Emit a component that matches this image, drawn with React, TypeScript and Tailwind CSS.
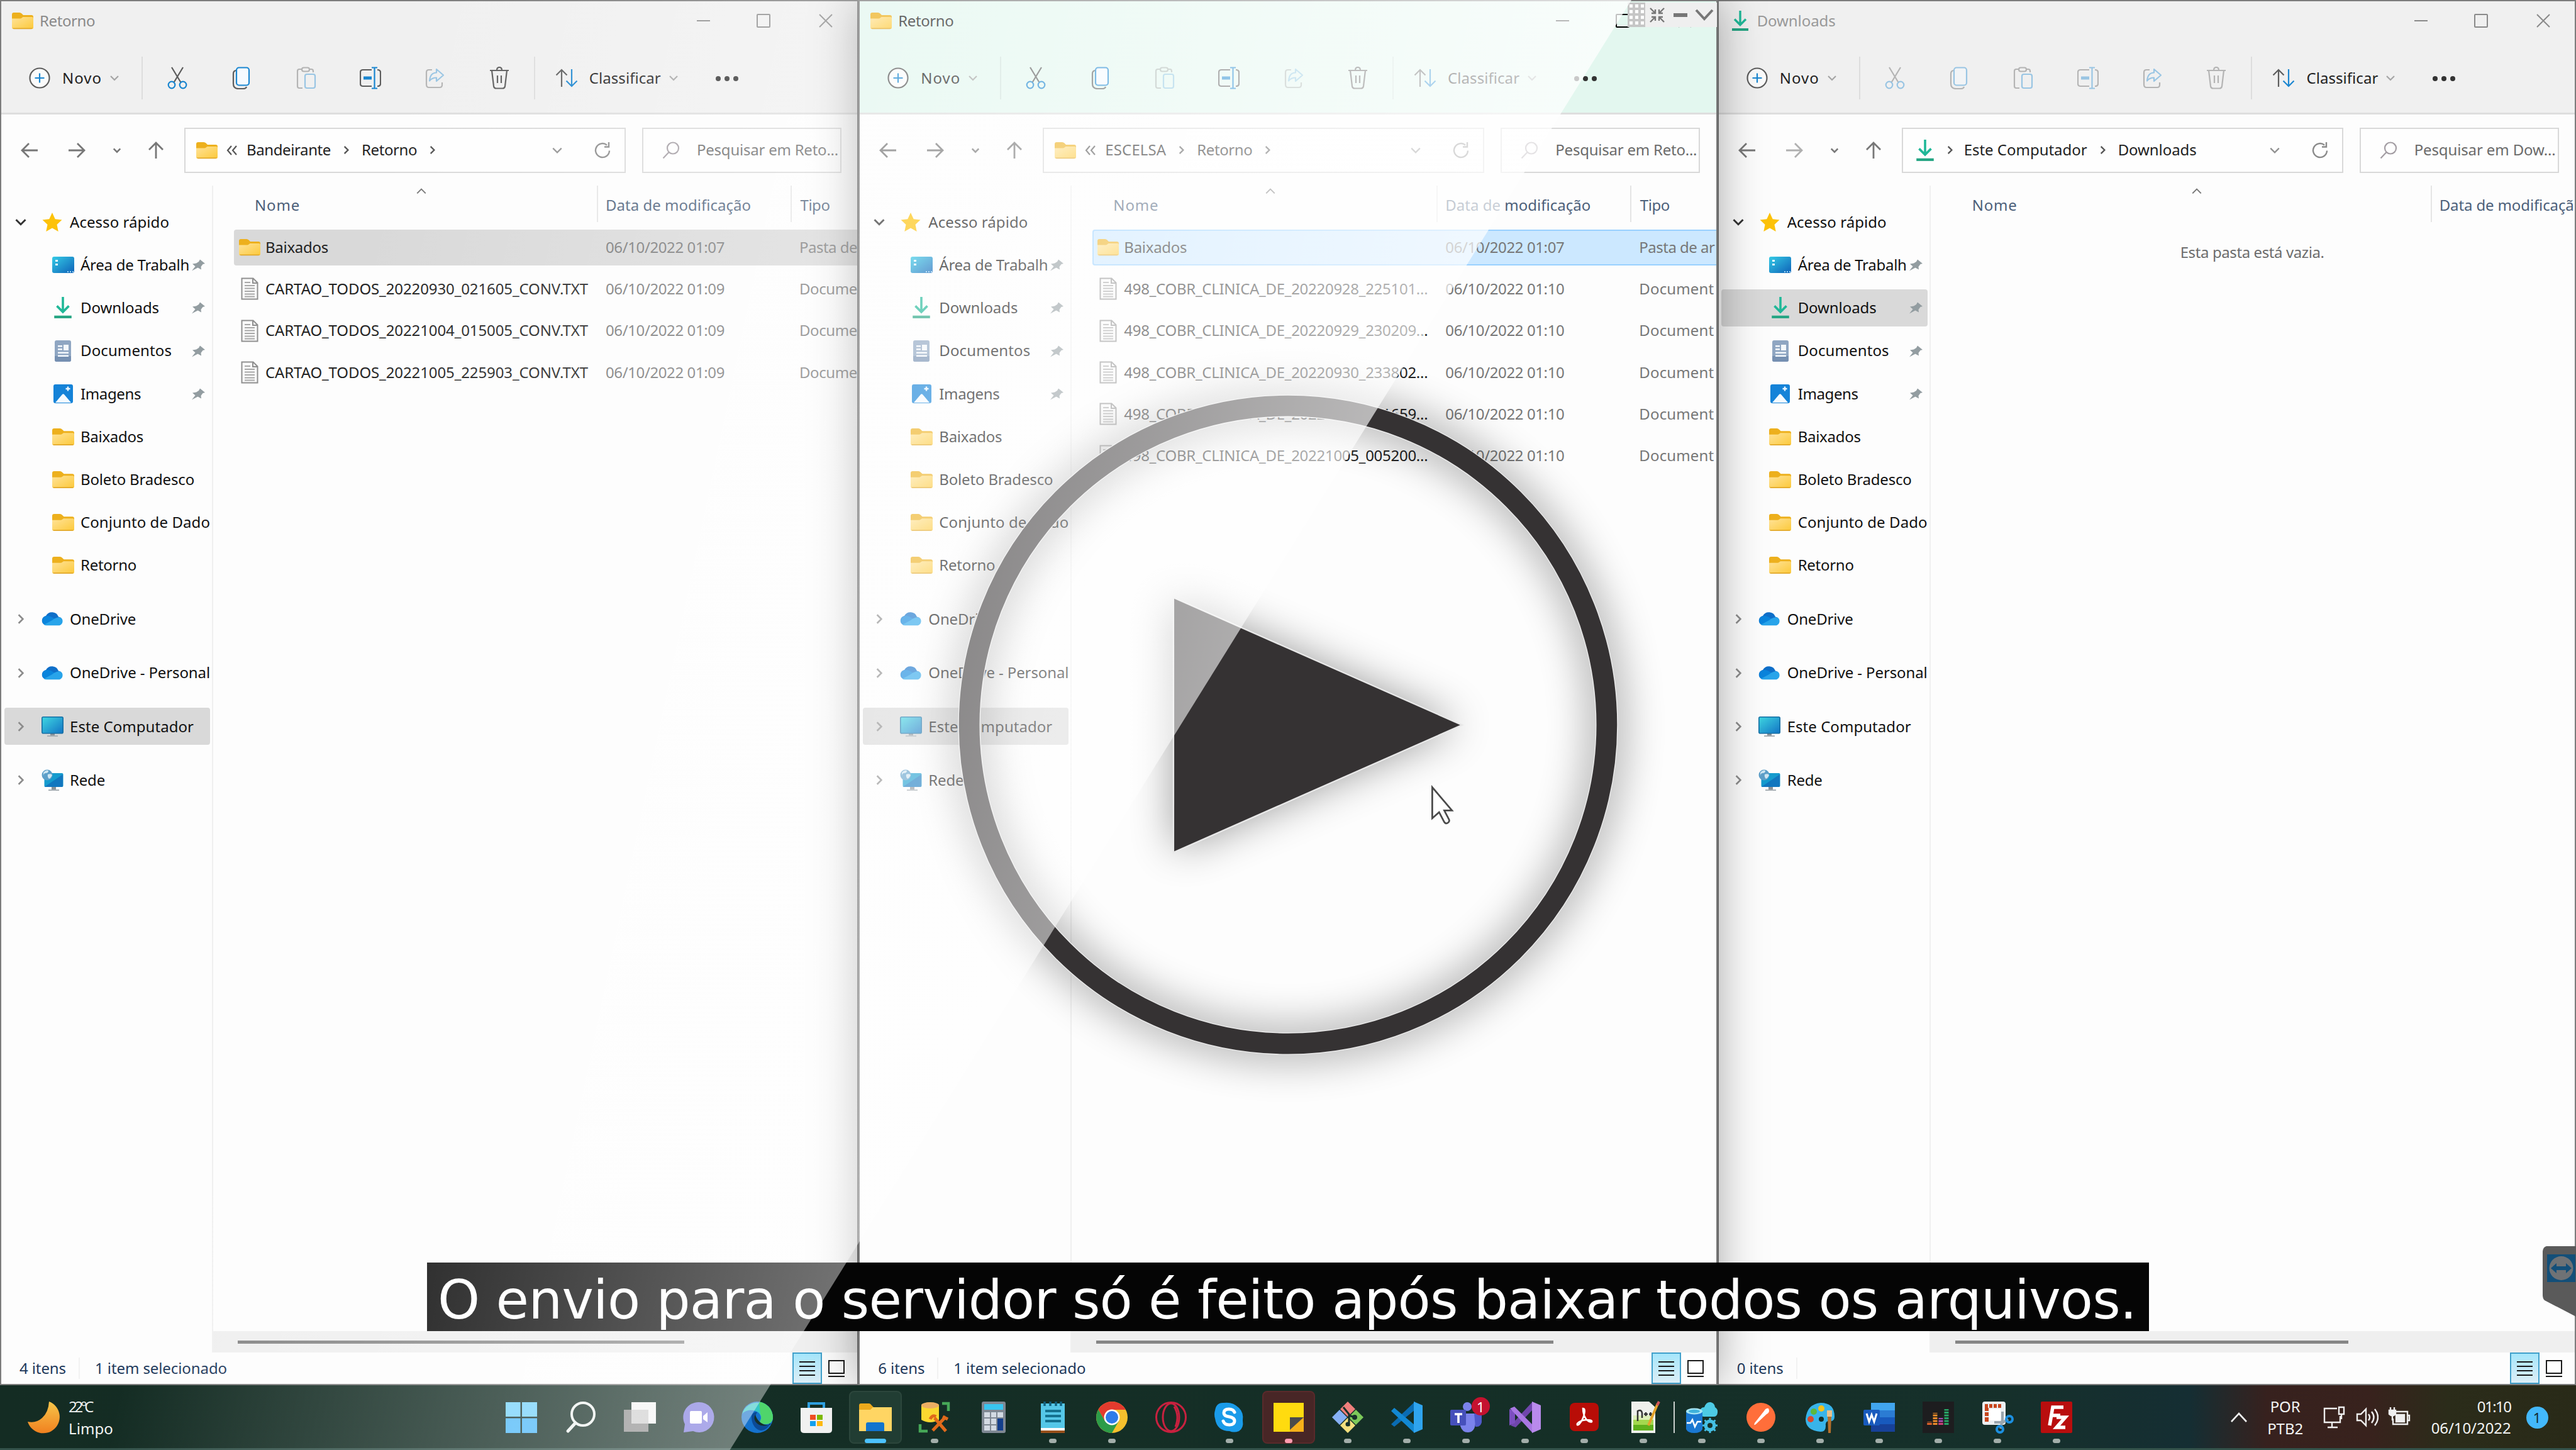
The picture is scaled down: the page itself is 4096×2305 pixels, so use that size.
import React, { useLayoutEffect, useRef, useState } from "react";

/* Text whose letter spacing is tuned so that it fills a given width */
function T({ w, className = "", children }: { w?: number; className?: string; children: string }) {
  const ref = useRef<HTMLSpanElement>(null);
  const [ls, setLs] = useState(0);
  useLayoutEffect(() => {
    if (!ref.current || !w) return;
    ref.current.style.letterSpacing = "0px";
    const nat = ref.current.getBoundingClientRect().width;
    const v = (w - nat) / children.length;
    ref.current.style.letterSpacing = v + "px";
    setLs(v);
  }, [w, children]);
  return (
    <span ref={ref} className={"inline-block shrink-0 whitespace-pre [font-variant-ligatures:none] " + className} style={{ letterSpacing: ls }}>
      {children}
    </span>
  );
}

const G = "#5c5c5c";
const B = "#1a86d0";

/* ---------- small glyphs ---------- */
const Chev = ({ d = "down", s = 16, c = "#8a8a8a", k = 2.2 }: { d?: string; s?: number; c?: string; k?: number }) => {
  const p: Record<string, string> = {
    down: "M2 5l6 6 6-6",
    up: "M2 11l6-6 6 6",
    right: "M5 2l6 6-6 6",
  };
  return (
    <svg width={s} height={s} viewBox="0 0 16 16" fill="none" stroke={c} strokeWidth={(k * 16) / s} className="shrink-0">
      <path d={p[d]} />
    </svg>
  );
};

const Folder = ({ s = 34 }: { s?: number }) => (
  <svg width={s} height={(s * 28) / 34} viewBox="0 0 34 28" className="shrink-0">
    <defs>
      <linearGradient id="fold" x1="0" y1="0" x2="1" y2="1">
        <stop offset="0" stopColor="#ffe399" />
        <stop offset="1" stopColor="#fcc93a" />
      </linearGradient>
    </defs>
    <path d="M0 4q0-3 3-3h9q2 0 3.500 1.600L18 5h13q3 0 3 3v6H0z" fill="#edb01d" />
    <path d="M0 10.500h13q1.500 0 2.500-1L17.500 8H32q2 0 2 2v15q0 2-2 2H2q-2 0-2-2z" fill="url(#fold)" />
    <path d="M1 25.500h32q-.5 1.800-2 1.800H3q-1.500 0-2-1.800z" fill="#e2a92a" />
  </svg>
);

const DownArrow = ({ s = 34 }: { s?: number }) => (
  <svg width={s} height={s} viewBox="0 0 34 34" fill="none" className="shrink-0">
    <path d="M17 1v22M8 14.500l9 9 9-9" stroke="#20b898" strokeWidth="3.400" />
    <path d="M4 31h26" stroke="#25a583" strokeWidth="4" />
  </svg>
);

const Txt = () => (
  <svg width="28" height="36" viewBox="0 0 28 36" fill="none" className="shrink-0">
    <path d="M1.500 1.500h18l7 7v26h-25z" fill="#fafafa" stroke="#8f8f8f" strokeWidth="2" />
    <path d="M19 2v7h7" stroke="#8f8f8f" strokeWidth="2" />
    <path d="M6 8h9M6 13h16M6 17.500h16M6 22h16M6 26.500h16M6 30.500h16" stroke="#a8a8a8" strokeWidth="1.800" />
  </svg>
);

const Pin = () => (
  <svg width="24" height="24" viewBox="0 0 24 24" className="shrink-0">
    <path d="M15 3.500l8 6.500-3.500 1-3 4 .5 4.500-5.500-3L2 21.500l5.500-7L3 10.500l6-1 4-2.500z" fill="#939da1" />
  </svg>
);

const Star = () => (
  <svg width="34" height="34" viewBox="0 0 34 34" className="shrink-0">
    <path d="M17 2l4.700 10.200 10.800 1.300-8 7.500 2.200 11L17 26.500 7.300 32l2.200-11-8-7.500 10.800-1.300z" fill="#fdc209" />
  </svg>
);

const Desk = () => (
  <svg width="35" height="28" viewBox="0 0 35 28" className="shrink-0">
    <defs>
      <linearGradient id="dsk" x1="0" y1="0" x2="1" y2="1">
        <stop offset="0" stopColor="#35cbe6" />
        <stop offset="1" stopColor="#0e62b8" />
      </linearGradient>
    </defs>
    <rect y="1" width="35" height="26" rx="3" fill="url(#dsk)" />
    <path d="M5 6h4v3H5zM5 12h4v3H5z" fill="#e8fbff" />
    <path d="M24 24h2v2h-2zM28 24h2v2h-2zM32 24h2v2h-2z" fill="#9fd6f5" />
  </svg>
);

const Docs = () => (
  <svg width="28" height="36" viewBox="0 0 28 36" className="shrink-0">
    <rect x="1" y="1" width="26" height="34" rx="3" fill="#8fa6c2" />
    <path d="M1 26h26v6q0 3-3 3H4q-3 0-3-3z" fill="#7690b2" />
    <path d="M6 9h7v2.500H6zM6 14h7v2.500H6zM15 8h8v9h-8zM6 19.500h17V22H6zM6 24.500h17V27H6z" fill="#f4f8fc" />
  </svg>
);

const Pics = () => (
  <svg width="31" height="32" viewBox="0 0 31 32" className="shrink-0">
    <rect y="1" width="31" height="30" rx="3" fill="#1583d8" />
    <path d="M3 30l11-13q1.500-1.500 3 0l11 13z" fill="#f5fbff" />
    <path d="M23 4.500v7M19.500 8h7" stroke="#e9f6ff" strokeWidth="2.400" />
  </svg>
);

const Cloud = () => (
  <svg width="35" height="24" viewBox="0 0 35 24" className="shrink-0">
    <path d="M8 22a7.500 7.500 0 0 1-1-14.900A11 11 0 0 1 27 8.500 6.900 6.900 0 0 1 28 22z" fill="#0f6fc9" />
    <path d="M7 7.200q5-1 9 1.600l10 6L8 22a7.500 7.500 0 0 1-1-14.800z" fill="#0a84dc" />
    <path d="M4 21l13-7q7-5.500 13-4.500a6.900 6.900 0 0 1-1.500 12.700H8q-2 0-4-1.200z" fill="#28a4ea" />
  </svg>
);

const PC = () => (
  <svg width="35" height="34" viewBox="0 0 35 34" className="shrink-0">
    <defs>
      <linearGradient id="pcg" x1="0" y1="0" x2="1" y2="1">
        <stop offset="0" stopColor="#3fd8e2" />
        <stop offset="1" stopColor="#1273c4" />
      </linearGradient>
    </defs>
    <path d="M14 27h7v4h-7z" fill="#8b9298" />
    <path d="M9 31h17v2H9z" fill="#a9b0b5" />
    <rect x=".8" y="1.800" width="33.400" height="26" rx="2" fill="url(#pcg)" stroke="#176fa4" strokeWidth="1.600" />
  </svg>
);

const Net = () => (
  <svg width="35" height="36" viewBox="0 0 35 36" className="shrink-0">
    <path d="M16 28h7v5h-7z" fill="#8b9298" />
    <path d="M11 33h17v2H11z" fill="#a9b0b5" />
    <rect x="4.500" y="7" width="30" height="22" rx="2" fill="#159bce" />
    <path d="M4.500 29L34 9v18q0 2-2 2z" fill="#1277bf" />
    <circle cx="9" cy="10" r="8.500" fill="#5d9fc9" />
    <path d="M3 6q4-5 8-3 0 4-4 4t-4 5zM10 9q5-2 7 1-2 5-5 6-3-3-2-7z" fill="#cfe6f2" />
  </svg>
);

/* ---------- toolbar glyphs ---------- */
const Svg = ({ children, w = 34, h = 36, off = false }: { children: React.ReactNode; w?: number; h?: number; off?: boolean }) => (
  <svg
    width={w}
    height={h}
    viewBox={`0 0 ${w} ${h}`}
    fill="none"
    strokeWidth="2.200"
    className={"shrink-0 " + (off ? "opacity-40" : "")}
  >
    {children}
  </svg>
);
const Cut = ({ off }: { off?: boolean }) => (
  <Svg off={off}>
    <path d="M8 1l14.500 24M26 1L11.500 25" stroke={G} />
    <circle cx="8" cy="29" r="5.300" stroke={B} />
    <circle cx="26" cy="29" r="5.300" stroke={B} />
  </Svg>
);
const Copy = ({ off }: { off?: boolean }) => (
  <Svg off={off}>
    <path d="M8 6q-4 1-4 5v16q0 8 8 8h8q4 0 5-3" stroke={G} />
    <rect x="9" y="1.500" width="20" height="28" rx="4" stroke={B} fill="#f5faff" />
  </Svg>
);
const Paste = ({ off }: { off?: boolean }) => (
  <Svg off={off}>
    <path d="M11 34H6q-3 0-3-3V7q0-3 3-3h4M22 4h3q3 0 3 3v2" stroke={G} />
    <rect x="10" y="1.500" width="12" height="6" rx="3" stroke={G} />
    <rect x="15" y="12" width="16" height="22" rx="3" stroke={B} />
  </Svg>
);
const Rename = ({ off }: { off?: boolean }) => (
  <Svg off={off}>
    <path d="M19 31H5q-4 0-4-4V9q0-4 4-4h14M28 5q5 0 5 4v18q0 4-5 4" stroke={G} />
    <path d="M19 1.500h9M23.500 1.500v33M19 34.500h9" stroke={B} />
    <rect x="6" y="15.500" width="13" height="5" fill={B} />
  </Svg>
);
const Share = ({ off }: { off?: boolean }) => (
  <Svg off={off}>
    <path d="M13 5H8q-4 0-4 4v19q0 5 4 5h17q4 0 4-4v-4" stroke={G} />
    <path d="M20 4l11 9.500L20 23v-5.500q-7 0-11 5 1-13 11-13z" stroke={B} strokeLinejoin="round" />
  </Svg>
);
const Trash = ({ off }: { off?: boolean }) => (
  <Svg off={off}>
    <path d="M2 6h30M13 6q0-5 4-5t4 5M5 6l3 25q.5 3.500 4 3.500h10q3.500 0 4-3.500L29 6M14 14v12M20 14v12" stroke={G} />
  </Svg>
);

/* ---------- explorer window ---------- */
type Row = { n: string; w: number; d: string; t: string; tw: number; folder?: boolean };
type Win = {
  title: string;
  titleW: number;
  titleCls: string;
  head: string;
  down?: boolean;
  crumbs: [string, number][];
  last: boolean;
  search: string;
  off: boolean;
  nameCol: string;
  nameCell: string;
  tipo: boolean;
  dateHead: string;
  dateW: number;
  rowSel: string;
  rows: Row[];
  thumb: string;
  count: string;
  sel: string;
  active?: boolean;
};

const side: { n: string; w: number; i: React.ReactNode; pin?: boolean }[] = [
  { n: "Área de Trabalh", w: 173, i: <Desk />, pin: true },
  { n: "Downloads", w: 125, i: <DownArrow s={36} />, pin: true },
  { n: "Documentos", w: 145, i: <Docs />, pin: true },
  { n: "Imagens", w: 96, i: <Pics />, pin: true },
  { n: "Baixados", w: 100, i: <Folder s={35} /> },
  { n: "Boleto Bradesco", w: 181, i: <Folder s={35} /> },
  { n: "Conjunto de Dado", w: 206, i: <Folder s={35} /> },
  { n: "Retorno", w: 89, i: <Folder s={35} /> },
];
const groups: { n: string; w: number; i: React.ReactNode }[] = [
  { n: "OneDrive", w: 105, i: <Cloud /> },
  { n: "OneDrive - Personal", w: 223, i: <Cloud /> },
  { n: "Este Computador", w: 197, i: <PC /> },
  { n: "Rede", w: 56, i: <Net /> },
];

function Sidebar({ sel }: { sel: string }) {
  return (
    <div className="flex w-[337px] shrink-0 flex-col border-r-2 border-[#f0f0f0] pt-[24px] text-[#111]">
      <div className="flex h-[68.2px] items-center pl-[21px]">
        <Chev s={20} c="#333" k={3} />
        <div className="ml-[23px] flex w-[34px] justify-center"><Star /></div>
        <T w={158} className="ml-[11px]">Acesso rápido</T>
      </div>
      {side.map((r) => (
        <div key={r.n} className="flex h-[68.2px] items-center pl-[4px] pr-[3px]">
          <div className={"flex h-[59px] w-full items-center rounded-[4px] " + (sel === r.n ? "bg-[#d9d9d9]" : "")}>
            <div className="ml-[75px] flex w-[38px] shrink-0 justify-center">{r.i}</div>
            <div className={"ml-[9px] " + (r.pin ? "w-[172px]" : "w-[205px]")}>
              <T w={r.w}>{r.n}</T>
            </div>
            {r.pin && <div className="ml-[3px]"><Pin /></div>}
          </div>
        </div>
      ))}
      <div className="mt-[9px] flex flex-col">
        {groups.map((r) => (
          <div key={r.n} className="flex h-[85.3px] items-center pl-[5px] pr-[3px]">
            <div className={"flex h-[59px] w-full items-center rounded-[4px] " + (sel === r.n ? "bg-[#d9d9d9]" : "")}>
              <div className="ml-[17px]"><Chev d="right" s={18} c="#8c8c8c" k={2.6} /></div>
              <div className="ml-[23px] flex w-[36px] shrink-0 justify-center">{r.i}</div>
              <T w={r.w} className="ml-[10px]">{r.n}</T>
            </div>
          </div>
        ))}
      </div>
    </div>
  );
}

function Explorer({ v }: { v: Win }) {
  const vline = <div className="h-[68px] w-[2px] shrink-0 bg-black/8" />;
  return (
    <div
      className={
        "flex h-[2202px] w-[1365.33px] shrink-0 flex-col overflow-hidden border-2 border-[#7c7c7c] bg-[#fdfdfd] text-[24px] " +
        (v.active ? "relative z-10 shadow-[0_0_70px_rgba(0,0,0,0.36)]" : "")
      }
    >
      <div className={"flex h-[180px] shrink-0 flex-col border-b-3 border-[#dedede] " + v.head}>
        <div className="flex h-[62px] shrink-0 items-center pl-[17px]">
          {v.down ? <DownArrow s={34} /> : <Folder />}
          <T w={v.titleW} className={"ml-[10px] mt-[1px] " + v.titleCls}>{v.title}</T>
          <div className="ml-auto flex items-center pr-[39px]">
            <div className={"h-[2px] w-[21px] " + (v.active ? "bg-black" : "bg-[#8a8a8a]")} />
            <div className={"ml-[74px] h-[22px] w-[22px] rounded-[2px] border-2 " + (v.active ? "border-black" : "border-[#8a8a8a]")} />
            <svg width="22" height="22" viewBox="0 0 22 22" stroke="#8a8a8a" strokeWidth="2" className="ml-[77px]">
              <path d="M1 1l20 20M21 1L1 21" />
            </svg>
          </div>
        </div>
        <div className="flex flex-1 items-center pl-[44px] pt-[4px] text-[#222]">
          <svg width="34" height="34" viewBox="0 0 34 34" fill="none" strokeWidth="2.200" className="shrink-0">
            <circle cx="17" cy="17" r="15.500" stroke={G} fill="#fbfbfb" />
            <path d="M17 9.500v15M9.500 17h15" stroke={B} />
          </svg>
          <T w={63} className="ml-[19px] mt-[2px]">Novo</T>
          <div className="ml-[12px] mr-[35px]"><Chev c="#a5a5a5" /></div>
          {vline}
          <div className="ml-[4px] flex">
            {[
              <Cut off={v.off} />,
              <Copy off={v.off} />,
              <Paste off />,
              <Rename off={v.off} />,
              <Share off />,
              <Trash off={v.off} />,
            ].map((el, i) => (
              <div key={i} className="flex w-[102.300px] justify-center">{el}</div>
            ))}
          </div>
          <div className="ml-[4px]">{vline}</div>
          <svg width="36" height="30" viewBox="0 0 36 30" fill="none" strokeWidth="2.200" className="ml-[32px] shrink-0">
            <path d="M10 29V2M1.500 10.500L10 2l8.500 8.500" stroke={G} />
            <path d="M26 1v27M17.500 19.500L26 28l8.500-8.500" stroke={B} />
          </svg>
          <T w={114} className="ml-[18px] mt-[2px]">Classificar</T>
          <div className="ml-[12px]"><Chev c="#a5a5a5" /></div>
          <div className="ml-[59px] mt-[2px] flex gap-[6px]">
            {[0, 1, 2].map((i) => (
              <div key={i} className="h-[8px] w-[8px] rounded-full bg-[#333]" />
            ))}
          </div>
        </div>
      </div>

      <div className="flex h-[113px] shrink-0 items-center text-[#222]">
        <svg width="28" height="26" viewBox="0 0 28 26" fill="none" stroke="#777" strokeWidth="2.800" className="ml-[31px]">
          <path d="M27 13H2M13 2L2 13l11 11" />
        </svg>
        <svg width="28" height="26" viewBox="0 0 28 26" fill="none" stroke={v.down ? "#b0b0b0" : "#777"} strokeWidth="2.800" className="ml-[47px]">
          <path d="M1 13h25M15 2l11 11-11 11" />
        </svg>
        <div className="ml-[43px]"><Chev s={14} c="#777" k={2.600} /></div>
        <svg width="26" height="28" viewBox="0 0 26 28" fill="none" stroke="#777" strokeWidth="2.800" className="ml-[42px]">
          <path d="M13 27V2M2 13L13 2l11 11" />
        </svg>
        <div className="ml-[32px] flex h-[72px] w-[702px] shrink-0 items-center border-2 border-[#d9d9d9] bg-[#fefefe] pl-[17px]">
          {v.down ? <DownArrow s={36} /> : <Folder />}
          <div className={"flex justify-center " + (v.down ? "w-[44px]" : "w-[46px]")}>
            {v.last ? (
              <svg width="18" height="16" viewBox="0 0 18 16" fill="none" stroke="#555" strokeWidth="2.200">
                <path d="M8 1L2 8l6 7M16 1l-6 7 6 7" />
              </svg>
            ) : (
              <Chev d="right" s={15} c="#555" k={2.400} />
            )}
          </div>
          {v.crumbs.map(([n, w], i) => (
            <React.Fragment key={n}>
              <T w={w}>{n}</T>
              {(i === 0 || v.last) && <div className="flex w-[49px] justify-center"><Chev d="right" s={15} c="#555" k={2.400} /></div>}
            </React.Fragment>
          ))}
          <div className="ml-auto flex items-center pr-[21px]">
            <Chev s={18} c="#909090" />
            <svg width="28" height="28" viewBox="0 0 28 28" fill="none" stroke="#8a8a8a" strokeWidth="2.400" className="ml-[49px]">
              <path d="M25 14.500A11 11 0 1 1 21 5.600M24 1v7.500h-7" />
            </svg>
          </div>
        </div>
        <div className="ml-[26px] flex h-[72px] w-[317px] shrink-0 items-center overflow-hidden border-2 border-[#d9d9d9] bg-[#fefefe] pl-[30px]">
          <svg width="28" height="28" viewBox="0 0 28 28" fill="none" stroke="#a39da3" strokeWidth="2.200" className="shrink-0">
            <circle cx="17" cy="10.500" r="9" />
            <path d="M10.500 17L1.500 26.500" />
          </svg>
          <T w={225} className="ml-[27px] text-[#6b6b6b]">{v.search}</T>
        </div>
      </div>

      <div className="flex min-h-0 flex-1">
        <Sidebar sel={v.sel} />
        <div className="flex min-w-0 flex-1 flex-col">
          <div className="flex h-[65px] shrink-0 items-start pl-[51px] text-[#4c607a]">
            <div className={"relative flex h-[58px] shrink-0 items-center border-r-2 border-[#e5e5e5] pl-[15px] pt-[4px] " + v.nameCol}>
              <T w={72}>Nome</T>
              <div className="absolute inset-x-0 top-0 flex justify-center"><Chev d="up" s={18} c="#777" k={2} /></div>
            </div>
            <div className={"flex h-[58px] w-[307.500px] shrink-0 items-center pl-[12px] pt-[4px] " + (v.tipo ? "border-r-2 border-[#e5e5e5]" : "")}>
              <T w={v.dateW}>{v.dateHead}</T>
            </div>
            {v.tipo && <div className="flex h-[58px] items-center pl-[14px] pt-[4px]"><T w={47}>Tipo</T></div>}
          </div>
          {v.rows.length === 0 && (
            <div className="mt-[25px] flex pl-[397px] text-[#6d6d6d]"><T w={229}>Esta pasta está vazia.</T></div>
          )}
          {v.rows.map((r, i) => (
            <div key={r.n} className="flex h-[66.300px] shrink-0 items-center pl-[33px]">
              <div className={"flex h-[57px] flex-1 items-center rounded-l-[4px] border-y-2 border-l-2 " + (i === 0 ? v.rowSel : "border-transparent")}>
                <div className="flex w-[46px] shrink-0 justify-center">{r.folder ? <Folder /> : <Txt />}</div>
                <div className={"shrink-0 pl-[2px] text-[#222] " + v.nameCell}><T w={r.w}>{r.n}</T></div>
                <div className="w-[308px] shrink-0 text-[#777]"><T w={189}>{r.d}</T></div>
                <T w={r.tw} className="text-[#777]">{r.t}</T>
              </div>
            </div>
          ))}
          <div className="mt-auto flex h-[34px] shrink-0 items-center bg-[#efefef] pl-[39px]">
            <div className={"h-[5px] bg-[#868686] " + v.thumb} />
          </div>
        </div>
      </div>

      <div className="flex h-[50px] shrink-0 items-center pl-[29px] text-[#1e395b]">
        <T w={74}>{v.count}</T>
        <div className="ml-[20px] h-[34px] w-[2px] bg-[#f2f2f2]" />
        {v.rows.length > 0 && <T w={210} className="ml-[24px]">1 item selecionado</T>}
        <div className="ml-auto flex h-full items-center pr-[20px]">
          <div className="flex h-full w-[47px] flex-col items-center justify-center gap-[5px] border-2 border-[#41a0cb] bg-gradient-to-b from-[#a5e6fb] to-[#dceef6]">
            {[0, 1, 2, 3].map((i) => (
              <div key={i} className="h-[2px] w-[25px] bg-[#1a1a1a]" />
            ))}
          </div>
          <div className="ml-[10px] flex flex-col gap-[3px]">
            <div className="h-[22px] w-[26px] border-2 border-[#1a1a1a] bg-white" />
            <div className="h-[2px] w-[26px] bg-[#1a1a1a]" />
          </div>
        </div>
      </div>
    </div>
  );
}

const f1 = (n: string): Row => ({ n, w: 513, d: "06/10/2022 01:09", t: "Docume", tw: 92 });
const f2 = (n: string): Row => ({ n, w: 483, d: "06/10/2022 01:10", t: "Document", tw: 119 });
const bx = (t: string, tw: number): Row => ({ n: "Baixados", w: 100, d: "06/10/2022 01:07", t, tw, folder: true });

const wins: Win[] = [
  {
    title: "Retorno", titleW: 88, titleCls: "text-[#8a8a8a]", head: "bg-[#f0f0f0]",
    crumbs: [["Bandeirante", 134], ["Retorno", 88]], last: true, search: "Pesquisar em Reto...", off: false,
    nameCol: "w-[561px]", nameCell: "w-[543px]", tipo: true, dateHead: "Data de modificação", dateW: 231, rowSel: "border-[#d9d9d9] bg-[#d9d9d9]",
    rows: [bx("Pasta de", 92), f1("CARTAO_TODOS_20220930_021605_CONV.TXT"), f1("CARTAO_TODOS_20221004_015005_CONV.TXT"), f1("CARTAO_TODOS_20221005_225903_CONV.TXT")],
    thumb: "w-[710px]", count: "4 itens", sel: "Este Computador",
  },
  {
    title: "Retorno", titleW: 88, titleCls: "text-[#222]", head: "bg-[#e3f7ef]", active: true,
    crumbs: [["ESCELSA", 97], ["Retorno", 88]], last: true, search: "Pesquisar em Reto...", off: false,
    nameCol: "w-[531px]", nameCell: "w-[513px]", tipo: true, dateHead: "Data de modificação", dateW: 231, rowSel: "border-[#99d1ff] bg-[#cce8ff]",
    rows: [
      bx("Pasta de ar", 120),
      f2("498_COBR_CLINICA_DE_20220928_225101..."),
      f2("498_COBR_CLINICA_DE_20220929_230209..."),
      f2("498_COBR_CLINICA_DE_20220930_233802..."),
      f2("498_COBR_CLINICA_DE_20221004_021659..."),
      f2("498_COBR_CLINICA_DE_20221005_005200..."),
    ],
    thumb: "w-[727px]", count: "6 itens", sel: "Este Computador",
  },
  {
    title: "Downloads", titleW: 125, titleCls: "text-[#999]", head: "bg-[#f0f0f0]", down: true,
    crumbs: [["Este Computador", 196], ["Downloads", 125]], last: false, search: "Pesquisar em Dow...", off: true,
    nameCol: "w-[746px]", nameCell: "w-[541px]", tipo: false, dateHead: "Data de modificaçã", dateW: 214, rowSel: "",
    rows: [], thumb: "w-[625px]", count: "0 itens", sel: "Downloads",
  },
];

/* ---------- taskbar ---------- */
type App = { k: string; dot?: boolean; el: React.ReactNode };
const apps: App[] = [
  { k: "start", el: (<g><path d="M0 1h23.500v23H0zM26 1h24v23H26z" fill="#76d2fb" /><path d="M0 26.500h23.500V50H0zM26 26.500h24V50H26z" fill="#4fb9f8" /></g>) },
  { k: "search", el: (<g fill="none" stroke="#eef2f0" strokeWidth="4"><circle cx="29" cy="20" r="18" /><path d="M17 34L5 47" strokeWidth="5" strokeLinecap="round" /></g>) },
  { k: "tasks", el: (<g><path d="M0 13h39v35H0z" fill="#8f8f8f" /><path d="M12 1h39v34H12z" fill="#f4f4f4" /><path d="M12 13h27v22H12z" fill="#cfcfcf" /></g>) },
  { k: "chat", el: (<g><path d="M25 1a24 24 0 1 1-9 46L1 49l2-13A24 24 0 0 1 25 1z" fill="#7c78dd" /><rect x="11" y="15" width="19" height="20" rx="2" fill="#fff" /><path d="M32 23l7-6v16l-7-5z" fill="#fff" /></g>) },
  { k: "edge", el: (<g><circle cx="25" cy="25" r="25" fill="#1572cd" /><path d="M1 20A25 25 0 0 1 50 25c0 8-6 11-12 11-6 0-10-3-8-6 3-6-1-13-8-15C13 12 4 15 1 20z" fill="#34c5c4" /><path d="M28 .3A25 25 0 0 1 50 25c0 8-6 11-12 11-6 0-10-3-8-6 2-3 2-7 0-10z" fill="#4fd56b" /><path d="M16 25c0-7 6-9 9-8-5 6-3 17 7 20 6 2 11 0 14-2-3 6-8 10-14 11-9 0-16-10-16-21z" fill="#0b4a96" /><path d="M22 21c-4 6 0 14 9 17 6 1 11 0 14-3l6 2V33c-3 3-8 4-12 4-8-1-14-7-17-16z" fill="#16302a" /></g>) },
  { k: "store", el: (<g><path d="M13 14V3h24v11" fill="none" stroke="#2f9fdf" strokeWidth="4" /><path d="M0 10h50v35q0 5-6 5H6q-6 0-6-5z" fill="#f1f1f1" /><path d="M15 21h9v8h-9z" fill="#f04f23" /><path d="M26 21h9v8h-9z" fill="#7db900" /><path d="M15 31h9v8h-9z" fill="#13a0ee" /><path d="M26 31h9v8h-9z" fill="#fdb913" /></g>) },
  { k: "files", el: (<g><path d="M-1 6q0-3 3-3h13q2 0 4 3l3 3h28v10H-1z" fill="#eda91c" /><path d="M-1 13h18l4-4h30v38H-1z" fill="#ffd563" /><path d="M10 47V36q0-3 3-3h23q3 0 3 3v11z" fill="#1274ce" /></g>) },
  { k: "db", dot: true, el: (<g><path d="M4 5q12-7 28 0v24q-14 8-28 0z" fill="#fbd830" /><ellipse cx="18" cy="6" rx="14" ry="5" fill="#ecae63" /><path d="M37 3h10v12M2 36v11h12" fill="none" stroke="#46a757" strokeWidth="4.500" /><path d="M22 46l21-22M25 26l18 21M18 28q4-8 9-4M38 24l8 4" stroke="#e06a1b" strokeWidth="5" fill="none" /></g>) },
  { k: "calc", el: (<g><rect x="6" width="38" height="50" rx="3" fill="#7f8893" /><path d="M10 4h30v9H10z" fill="#39c5ef" /><g fill="#d3dae3"><path d="M10 17h9v8h-9zM21 17h8v8h-8zM31 17h9v8h-9zM10 27h9v9h-9zM21 27h8v9h-8zM10 38h9v8h-9zM21 38h8v8h-8z" /></g><path d="M31 27h9v19h-9z" fill="#143f8c" /></g>) },
  { k: "notepad", dot: true, el: (<g><path d="M6 3h38v40H6z" fill="#55c7e8" /><path d="M12 0v7M21 0v7M30 0v7M38 0v7" stroke="#12617f" strokeWidth="3.500" /><path d="M13 15h25M13 23h25M13 31h25" stroke="#14718f" strokeWidth="4" /><path d="M6 42h38v4H6z" fill="#fff" /><path d="M6 46h38v4H6z" fill="#98501b" /></g>) },
  { k: "chrome", dot: true, el: (<g><circle cx="25" cy="25" r="25" fill="#f6c02d" /><path d="M3.500 12.500A25 25 0 0 0 25 50l11-19H14z" fill="#2c9c48" /><path d="M3.500 12.500L14 31l11-18h22a25 25 0 0 0-43.500-.5z" fill="#e33b2e" /><circle cx="25" cy="25" r="12.500" fill="#fff" /><circle cx="25" cy="25" r="10" fill="#2e7bea" /></g>) },
  { k: "opera", el: (<g fill="none" stroke="#c8213f" strokeWidth="3"><circle cx="25" cy="25" r="23.500" /><ellipse cx="25" cy="25" rx="13" ry="22" /><path d="M30 8q9 15 2 32" /></g>) },
  { k: "skype", dot: true, el: (<g><path d="M2 14Q4 1 16 2q14-2 24 8 8 8 6 20 2 12-6 17-8 3-15 0-20 0-23-20Q0 20 2 14z" fill="#1a9be9" /><path d="M33 17q-2-5-9-5-8 0-8 6 0 5 8 6 9 1.500 9 7t-8 6q-8 0-10-6" fill="none" stroke="#fff" strokeWidth="5" strokeLinecap="round" /></g>) },
  { k: "sticky", dot: true, el: (<g><path d="M1 2h48v46H1z" fill="#ffdb0f" /><path d="M27 48V25h22v23z" fill="#f6b01a" /><path d="M27 25h22L27 45z" fill="#4b4b4b" /></g>) },
  { k: "git", dot: true, el: (<g><path d="M25 0l12 12-12 12-12-12z" fill="#ef7f7c" /><path d="M38 13l12 12-12 12-12-12z" fill="#7cc95a" /><path d="M12 13l12 12-12 12L0 25z" fill="#86b0f5" /><path d="M25 26l12 12-12 12-12-12z" fill="#f3df7d" /><path d="M18 9l9 11v19M27 22l9 3" fill="none" stroke="#16302a" strokeWidth="3" /><circle cx="36" cy="25" r="4" fill="#16302a" /><circle cx="25" cy="36" r="3.500" fill="#16302a" /></g>) },
  { k: "code", dot: true, el: (<g><path d="M0 36l5 4 33-27V0z" fill="#0a6cb2" /><path d="M0 15l5-5 32 27-1 12z" fill="#1288d2" /><path d="M36 0l14 6v38l-14 6z" fill="#2fa4ee" /></g>) },
  { k: "teams", dot: true, el: (<g><circle cx="27" cy="8" r="7" fill="#7b83eb" /><path d="M16 19h24v17q-2 13-12 13-9 0-12-10z" fill="#7b83eb" /><path d="M38 19h12v14q-2 8-10 7z" fill="#5059c9" /><rect x="0" y="13" width="25" height="25" rx="2" fill="#4650bb" /><path d="M7 20h12M13 20v14" stroke="#fff" strokeWidth="3.600" /></g>) },
  { k: "vs", dot: true, el: (<g><path d="M2 38l8 3 27-28V0z" fill="#6f46ac" /><path d="M0 12v26l9-4V16z" fill="#7c4fc0" /><path d="M1 11l7-3 29 29v13z" fill="#a877e2" /><path d="M36 0l14 6v38l-14 6z" fill="#b98aec" /></g>) },
  { k: "acrobat", dot: true, el: (<g><rect x="2" y="2" width="46" height="45" rx="8" fill="#b80d07" /><path d="M23 11q4 0 2 9t-8 16q-4 3-3-1 4-5 14-6 10 0 9 3-2 2-8-3-6-7-6-18z" fill="none" stroke="#fff" strokeWidth="2.600" /></g>) },
  { k: "npp", dot: true, el: (<g><path d="M6 0h28l10 9v41H6z" fill="#eef0ec" /><path d="M9 36h32v10H9z" fill="#5fb01c" /><path d="M9 28h32v9H9z" fill="#a4d84e" /><path d="M9 22h32v7H9z" fill="#dcefb8" /><path d="M16 31V15q6-3 7 3v8M26 20h6M29 17v6M34 20h5M36.500 17v6" fill="none" stroke="#333" strokeWidth="2.500" /><path d="M48 3L33 38" stroke="#e5a32b" strokeWidth="4" /><path d="M50 0l-3 6" stroke="#d2555b" strokeWidth="4" /></g>) },
  { k: "azure", dot: true, el: (<g><path d="M22 17q0-8 7-8 3-9 10-8 6 1 7 8 5 3 4 9-1 6-6 6H28q-6-1-6-7z" fill="#4dcbe5" /><path d="M0 16v28q3 6 13 6t13-6V16z" fill="#1a78d2" /><ellipse cx="13" cy="15.500" rx="13" ry="5" fill="#a7e6f5" /><ellipse cx="13" cy="15.500" rx="9" ry="2.800" fill="#3fb2dc" /><path d="M1 34h6l3-5 4 11 4-8h6" fill="none" stroke="#fff" strokeWidth="2.600" /><circle cx="38" cy="38" r="7" fill="#16302a" stroke="#45bfe4" strokeWidth="5" /><path d="M38 26v24M26 38h24M29.500 29.500l17 17M46.500 29.500l-17 17" stroke="#45bfe4" strokeWidth="3" /><circle cx="38" cy="38" r="4" fill="#16302a" /></g>) },
  { k: "postman", dot: true, el: (<g><circle cx="25" cy="25" r="23" fill="#ff6e3a" /><path d="M37 11q3 6-3 9L17 36q-4 3-2-2l15-19q3-5 7-4z" fill="#fff" /></g>) },
  { k: "paint", dot: true, el: (<g><path d="M26 2q22 0 22 22 0 8-8 7-7-1-6 8 0 9-8 9Q2 46 2 28 4 4 26 2z" fill="#38b4ea" /><circle cx="10" cy="28" r="5" fill="#d9482f" /><circle cx="15" cy="16" r="5" fill="#5cb83c" /><circle cx="27" cy="11" r="5" fill="#f5c11d" /><circle cx="27" cy="28" r="4" fill="#16302a" /><path d="M37 22h6l-1 28h-4z" fill="#b5702c" /><path d="M36 14h8v10h-8z" fill="#e8c08d" /></g>) },
  { k: "word", dot: true, el: (<g><path d="M12 2h38v13H12z" fill="#41a5ee" /><path d="M12 14h38v12H12z" fill="#2b7cd3" /><path d="M12 25h38v12H12z" fill="#185abd" /><path d="M12 36h38v12H12z" fill="#174199" /><rect x="0" y="13" width="26" height="25" rx="2" fill="#185abd" /><path d="M5 19l4 13 4-11 4 11 4-13" fill="none" stroke="#fff" strokeWidth="3" /></g>) },
  { k: "eq", dot: true, el: (<g><path d="M0 0h50v50H0z" fill="#1d1d1f" /><g fill="none" strokeDasharray="3 1.500" strokeWidth="7"><path d="M11 37v-5M20 37V18" stroke="#ee8c2a" /><path d="M29 37V26" stroke="#a04bb0" /><path d="M38 37V12" stroke="#27a567" /><path d="M11 37v-5" stroke="#e0602a" /><path d="M29 37v-5" stroke="#d0417a" /></g></g>) },
  { k: "snip", dot: true, el: (<g><rect x="1" y="0" width="37" height="37" rx="4" fill="#eceff2" /><path d="M5 4h26v6H5zM5 4h6v28H5z" fill="#c7451c" /><path d="M11 4v6M18 4v6M25 4v6M5 16h6M5 24h6" stroke="#eceff2" strokeWidth="2" /><rect x="12" y="12" width="18" height="18" fill="#fff" /><path d="M33 16v13l-3 14M20 33h14l8-5" stroke="#9aa5ad" strokeWidth="4" fill="none" /><circle cx="44" cy="28" r="5" fill="none" stroke="#1c8fe0" strokeWidth="4" /><circle cx="29" cy="44" r="5" fill="none" stroke="#1c8fe0" strokeWidth="4" /></g>) },
  { k: "fz", dot: true, el: (<g><rect width="50" height="50" rx="2" fill="#b90e0e" /><path d="M36 9H19l-5 29M16 22h15M25 25h14L25 41h14" fill="none" stroke="#fff" strokeWidth="5.500" /></g>) },
];

function Taskbar() {
  return (
    <div className="relative z-20 flex h-[103px] w-[4096px] items-center border-b-3 border-[#33524a] bg-[linear-gradient(90deg,#142c23_0%,#152f27_62%,#16302b_78%,#152e33_85%,#37211e_88%,#38221d_92%,#2b2c1a_95%,#292a18_100%)] pt-[2px] text-[24px] text-[#f1f3f2]">
      <div className="flex w-[782px] shrink-0 items-center pl-[43px]">
        <svg width="52" height="52" viewBox="0 0 52 52">
          <defs>
            <linearGradient id="moon" x1="0" y1="0" x2="0" y2="1">
              <stop offset="0" stopColor="#f7c64a" />
              <stop offset="1" stopColor="#f0801f" />
            </linearGradient>
          </defs>
          <path d="M35 1a26 26 0 1 1-34 32Q14 36 24 27T35 1z" fill="url(#moon)" />
        </svg>
        <div className="ml-[14px] flex flex-col gap-[3px] leading-[32px]">
          <T w={54} className="font-['Open_Sans',sans-serif]">22°C</T>
          <T w={71}>Limpo</T>
        </div>
      </div>
      {apps.map((a) => (
        <div
          key={a.k}
          className={"relative flex h-[84px] w-[93.890px] shrink-0 items-center justify-center " + (a.k === "azure" ? "before:absolute before:left-[1px] before:top-[17px] before:h-[50px] before:w-[2px] before:bg-[#c9cfcc]" : "")}
        >
          {a.k === "files" && <div className="absolute inset-x-[5px] inset-y-0 rounded-[8px] border-2 border-[#2c463c] bg-[#213d33]" />}
          {a.k === "sticky" && <div className="absolute inset-x-[5px] inset-y-0 rounded-[8px] border-2 border-[#5a2a2b] bg-[#482626]" />}
          <svg width="50" height="50" viewBox="0 0 50 50" className="relative overflow-visible">{a.el}</svg>
          {a.k === "files" && <div className="absolute bottom-[1px] h-[7px] w-[34px] rounded-full bg-[#4cc2ff]" />}
          {a.dot && <div className={"absolute bottom-[1px] h-[7px] w-[12px] rounded-full " + (a.k === "sticky" ? "bg-[#ff9db0]" : "bg-[#a3aeaa]")} />}
          {a.k === "teams" && (
            <div className="absolute right-[9px] top-[10px] flex h-[29px] w-[29px] items-center justify-center rounded-full bg-[#c4122f] text-[22px] leading-none text-white">1</div>
          )}
        </div>
      ))}
      <div className="ml-[229px] flex items-center">
        <svg width="28" height="18" viewBox="0 0 28 18" fill="none" stroke="#eee" strokeWidth="2.600"><path d="M2 16L14 3l12 13" /></svg>
        <div className="ml-[30px] flex w-[60px] flex-col items-center gap-[3px] leading-[32px]">
          <T w={48}>POR</T>
          <T w={57}>PTB2</T>
        </div>
        <svg width="36" height="36" viewBox="0 0 36 36" fill="none" stroke="#eee" strokeWidth="2.400" className="ml-[29px]">
          <path d="M23 4H3v22h25V16M15 26v7M8 34h16" />
          <path d="M26 2h8v11h-8zM30 13v8" />
        </svg>
        <svg width="36" height="34" viewBox="0 0 36 34" fill="none" stroke="#eee" strokeWidth="2.400" className="ml-[17px]">
          <path d="M2 12h6l8-8v26l-8-8H2zM20 12q4 5 0 10M25 8q7 9 0 18M30 4q10 13 0 26" />
        </svg>
        <svg width="36" height="34" viewBox="0 0 36 34" fill="none" stroke="#eee" strokeWidth="2.400" className="ml-[15px]">
          <path d="M12 8h19v20H8v-9M31 14h3v8h-3" />
          <path d="M13 13h13v11H13z" fill="#eee" />
          <path d="M4 1v5M10 1v5M2 6h10v6q-5 5-10 0zM7 14v8" fill="#eee" />
        </svg>
        <div className="ml-[33px] flex w-[127px] flex-col items-end gap-[2px] leading-[32px]">
          <T w={54}>01:10</T>
          <T w={127}>06/10/2022</T>
        </div>
        <div className="ml-[24px] flex h-[35px] w-[35px] items-center justify-center rounded-full bg-[#43b8fb] text-[22px] leading-none text-[#12262e]">1</div>
      </div>
    </div>
  );
}

/* ---------- floating pieces ---------- */
const Recorder = () => (
  <div className="absolute left-[2588px] top-[4px] z-30 flex h-[39px] w-[142px] items-center bg-[#efefef]">
    <svg width="28" height="39" viewBox="0 0 28 39">
      <path d="M0 0h28v39H0z" fill="#c6c6c6" />
      {[3, 12, 21].map((x) => [3, 12, 21, 30].map((y) => <rect key={x + "-" + y} x={x} y={y} width="5" height="5" fill="#fff" />))}
    </svg>
    <svg width="24" height="24" viewBox="0 0 24 24" fill="none" stroke="#777" strokeWidth="2.400" className="ml-[7px]">
      <path d="M1 1l8 8M9 3v6H3M23 1l-8 8M15 3v6h6M1 23l8-8M9 21v-6H3M23 23l-8-8M15 21v-6h6" />
    </svg>
    <div className="ml-[14px] h-[6px] w-[22px] bg-[#777]" />
    <svg width="30" height="20" viewBox="0 0 30 20" fill="none" stroke="#777" strokeWidth="4" className="ml-[12px]"><path d="M2 2l13 14L28 2" /></svg>
  </div>
);

const Viewer = () => (
  <svg width="53" height="112" viewBox="0 0 53 112" className="absolute left-[4043px] top-[1981px] z-30">
    <path d="M0 8q1-7 6-8h47v112L3 86q-3-3-3-8z" fill="#5a5a5a" />
    <path d="M7 13h45v44H7z" fill="#134f79" />
    <circle cx="29.500" cy="35" r="19" fill="#6f7275" />
    <path d="M13 35l9-8v5h15v-5l9 8-9 8v-5H22v5z" fill="#134f79" />
  </svg>
);

const Caption = () => (
  <div className="absolute left-[679px] top-[2007px] z-30 flex h-[109px] w-[2738px] items-center bg-[#050505] pl-[17px] font-['DejaVu_Sans',sans-serif] text-[85.300px] leading-none text-white">
    <T w={2701} className="mt-[11px]">O envio para o servidor só é feito após baixar todos os arquivos.</T>
  </div>
);

const PlayOverlay = () => (
  <svg viewBox="0 0 6000 3376" width="4096" height="2305" preserveAspectRatio="none" className="absolute left-0 top-0 z-40">
    <defs>
      <linearGradient id="gloss" gradientUnits="userSpaceOnUse" x1="955" y1="0" x2="4543" y2="753">
        <stop offset="0" stopColor="#fff" stopOpacity="0" />
        <stop offset="1" stopColor="#fff" stopOpacity="1" />
      </linearGradient>
      <filter id="soft" filterUnits="userSpaceOnUse" x="1900" y="600" width="2200" height="2200">
        <feGaussianBlur stdDeviation="50" />
      </filter>
    </defs>
    <path d="M0 0v72l16-14 12 23q3 5 8 2t3-8L28 54h18z" transform="translate(3336 1833)" fill="#fff" stroke="#4a4a4a" strokeWidth="4" />
    <g filter="url(#soft)" opacity="0.4">
      <circle cx="3000" cy="1687.500" r="742.500" fill="none" stroke="#000" strokeWidth="64" />
      <path d="M2735 1394l666 294-666 294z" fill="#000" />
    </g>
    <circle cx="3000" cy="1687.500" r="742.500" fill="none" stroke="#ececec" strokeWidth="52" />
    <circle cx="3000" cy="1687.500" r="742.500" fill="none" stroke="#353233" strokeWidth="48" />
    <path d="M2735 1394l666 294-666 294z" fill="#353233" stroke="#e8e8e8" strokeWidth="7" className="[paint-order:stroke]" />
    <path d="M0 0H3800L1700 3376H0z" fill="url(#gloss)" />
  </svg>
);

export default function App() {
  return (
    <div className="relative h-[2305px] w-[4096px] overflow-hidden bg-white font-['Noto_Sans',sans-serif] leading-[1.36]">
      <div className="flex">
        {wins.map((v, i) => (
          <Explorer key={i} v={v} />
        ))}
      </div>
      <Taskbar />
      <Recorder />
      <Viewer />
      <Caption />
      <PlayOverlay />
    </div>
  );
}
